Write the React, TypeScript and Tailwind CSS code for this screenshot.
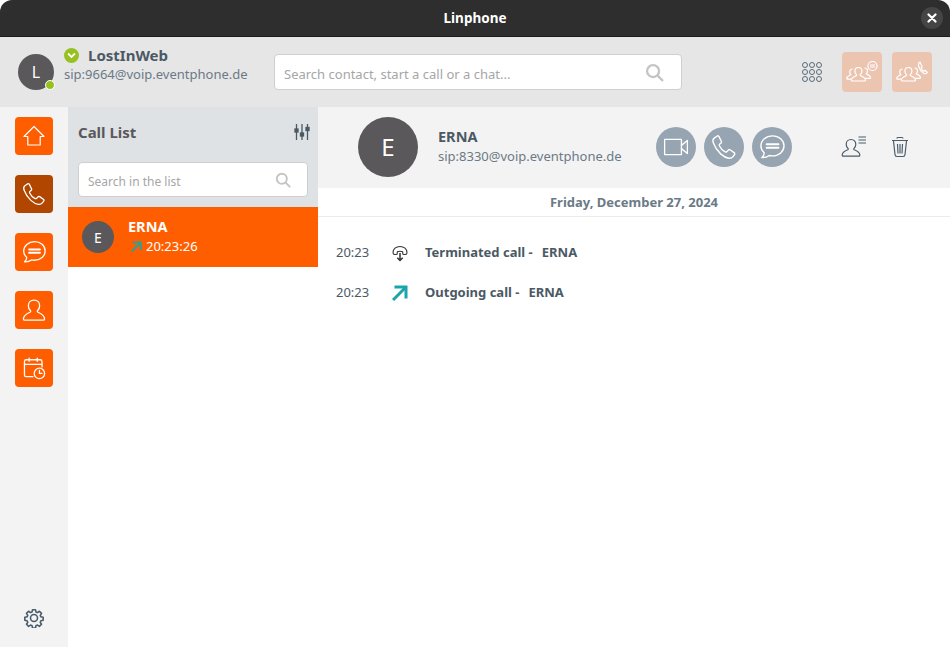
import React from "react";

const Stroke = ({ children, size = 26, color = "#fff", sw = 1.2, vb = "0 0 24 24" }: any) => (
  <svg width={size} height={size} viewBox={vb} fill="none" stroke={color} strokeWidth={sw} strokeLinecap="round" strokeLinejoin="round">
    {children}
  </svg>
);

const PhonePath = () => (
  <path d="M6.200 2.600 3.600 4.400C2.400 5.300 2.300 7 2.900 8.600c1.300 3.600 3.400 6.700 6.200 9.300 2.200 2 4.600 3.400 7 3.700 1.500.2 2.800-.4 3.600-1.400l1.400-1.800c.3-.5.3-1-.2-1.400l-3.700-2.600c-.5-.3-1-.3-1.400.1l-1.400 1.500c-.4.4-.9.4-1.400.2-2.300-1.200-4-3-5-5.200-.2-.5-.2-.9.2-1.300l1.300-1.200c.4-.4.5-.9.2-1.400L7.600 2.900c-.4-.5-.9-.6-1.400-.3Z" />
);

const ChatPath = () => (
  <>
    <path d="M12.500 2.500C6.800 2.500 2.500 6.300 2.500 11c0 2.300 1 4.300 2.700 5.800.2 1.700-.5 3.100-1.900 4.200 2.500.2 4.600-.4 6.300-1.700.9.200 1.900.3 2.900.3 5.500 0 9.800-3.800 9.800-8.600s-4.300-8.500-9.800-8.500Z" />
    <path d="M7.500 9.700h10M7.500 12.700h10" strokeWidth={1.800} />
  </>
);

const UserPath = () => (
  <path d="M12 2.800c-3.300 0-5.200 2.300-5.200 5.200 0 2 .8 3.400 1.800 4.400.6.600.4 1.300-.3 1.700-2.800 1.200-5.800 2.600-6 5.800-.1 1 .4 1.500 1.300 1.500h16.800c.9 0 1.400-.5 1.300-1.500-.2-3.200-3.200-4.600-6-5.800-.7-.4-.9-1.100-.3-1.700 1-1 1.800-2.400 1.800-4.400 0-2.900-1.900-5.200-5.200-5.200Z" />
);

const NavButton = ({ active, children }: { active?: boolean; children: React.ReactNode }) => (
  <div className={`flex h-[38px] w-[38px] items-center justify-center rounded-[4px] ${active ? "bg-[#b14600]" : "bg-[#ff5e00]"}`}>
    {children}
  </div>
);

const Round = ({ children }: { children: React.ReactNode }) => (
  <div className="flex h-10 w-10 items-center justify-center rounded-full bg-[#96a5b1]">{children}</div>
);

const Avatar = ({ letter, size, text }: { letter: string; size: string; text: string }) => (
  <div className={`flex shrink-0 items-center justify-center rounded-full bg-[#5a585b] text-white ${size} ${text}`}>{letter}</div>
);

const Search = ({ size }: { size: number }) => (
  <svg width={size} height={size} viewBox="0 0 20 20" fill="none" stroke="#c4c4c4" strokeWidth="2.400" strokeLinecap="round">
    <circle cx="8.500" cy="8.500" r="6.300" />
    <path d="m13.300 13.300 5 5" />
  </svg>
);

const Arrow = ({ size, sw }: { size: number; sw: number }) => (
  <svg width={size} height={size} viewBox="0 0 16 16" fill="none" stroke="#1aa5a8" strokeWidth={sw}>
    <path d="M2.500 2H14V13.500" />
    <path d="M14 2 1 15" />
  </svg>
);

const Group = ({ extra }: { extra: React.ReactNode }) => (
  <svg width="34" height="28" viewBox="0 0 34 28" fill="none" stroke="#fff" strokeWidth="1.200" strokeLinejoin="round">
    <path d="M7.500 11c-1.800 0-2.800 1.300-2.800 3 0 1.200.5 2 1.200 2.700-1.800.8-4 1.700-4.200 3.600 0 .6.300.9.800.9H6" />
    <path d="M19.500 10c1.800 0 3 1.300 3 3 0 1.300-.6 2.100-1.300 2.800 1.900.8 4.100 1.700 4.300 3.700 0 .6-.3.900-.8.900H20" />
    <path d="M13.500 9.500c-2.200 0-3.600 1.600-3.600 3.700 0 1.500.7 2.600 1.500 3.400.4.400.3.900-.2 1.100-2.200.9-4.700 2-4.900 4.300 0 .7.300 1 1 1h12.300c.6 0 1-.3.900-1-.2-2.300-2.700-3.400-4.900-4.300-.5-.2-.6-.7-.2-1.100.8-.8 1.500-1.900 1.500-3.400 0-2.100-1.400-3.700-3.400-3.700Z" />
    {extra}
  </svg>
);

export default function App() {
  return (
    <div className="flex h-[647px] w-[950px] flex-col overflow-hidden bg-white font-['Noto_Sans',sans-serif] text-[#4b5964]">
      <div className="relative flex h-[37px] shrink-0 items-center justify-center rounded-t-[12px] border-b border-[#1c1c1c] bg-[#2e2e2e]">
        <span className="text-[13.500px] font-bold text-white">Linphone</span>
        <div className="absolute right-[7px] top-[7px] flex h-[22px] w-[22px] items-center justify-center rounded-full bg-[#454545]">
          <svg width="10" height="10" viewBox="0 0 10 10" stroke="#fff" strokeWidth="2.200" strokeLinecap="round">
            <path d="m1.500 1.500 7 7M8.500 1.500l-7 7" />
          </svg>
        </div>
      </div>

      <div className="flex h-[70px] shrink-0 items-center bg-[#e6e6e6]">
        <div className="relative ml-[18px] mr-[10px]">
          <Avatar letter="L" size="h-9 w-9" text="text-[16px]" />
          <div className="absolute bottom-0 right-[-1px] h-[10px] w-[10px] rounded-full border border-white bg-[#96c11f]" />
        </div>
        <div className="w-[206px] pb-[16px]">
          <div className="flex h-[20px] items-center">
            <div className="flex h-[15px] w-[15px] items-center justify-center rounded-full bg-[#96c11f]">
              <svg width="9" height="7" viewBox="0 0 9 7" fill="none" stroke="#fff" strokeWidth="1.800">
                <path d="m1 1.500 3.500 3.500L8 1.500" />
              </svg>
            </div>
            <span className="ml-[9px] text-[15px] font-bold leading-none">LostInWeb</span>
          </div>
          <div className="text-[13px] leading-[18px] text-[#6b7a86]">sip:9664@voip.eventphone.de</div>
        </div>
        <div className="ml-[4px] flex h-9 w-[408px] items-center justify-between rounded-[4px] border border-[#cfcfcf] bg-white pl-[9px] pr-[17px]">
          <span className="pt-[6px] text-[13px] text-[#a6a6a6]">Search contact, start a call or a chat...</span>
          <Search size={19} />
        </div>
        <div className="ml-[120px] mr-[20px] grid grid-cols-3 gap-x-[1px] gap-y-[1px]">
          {Array.from({ length: 9 }).map((_, i) => (
            <div key={i} className="h-[6px] w-[6px] rounded-full border-[1.500px] border-[#5b6b78]" />
          ))}
        </div>
        <div className="flex h-10 w-10 items-center justify-center rounded-[4px] bg-[#ecc5b1]">
          <Group extra={<><circle cx="27.500" cy="8" r="4.500" /><path d="M25 7h5M25 9h5" /></>} />
        </div>
        <div className="ml-[10px] flex h-10 w-10 items-center justify-center rounded-[4px] bg-[#ecc5b1]">
          <Group extra={<path d="M25 4c-1.500.9-1.800 3-1.200 4.800.8 2.500 2.500 5 4.800 6.500 1.300.7 2.800.5 3.800-.8l-2.300-2.200-1.500.8c-1.200-.8-2-2-2.400-3.200l1-1L25 4Z" />} />
        </div>
      </div>

      <div className="flex min-h-0 flex-1">
        <div className="flex w-[68px] shrink-0 flex-col items-center bg-[#f3f3f3] pb-[19px] pt-[10px]">
          <div className="flex flex-col gap-5">
            <NavButton>
              <Stroke size={24}>
                <path d="M12 2.500 2 12.500h3.800v8.500h12.400v-8.500H22L12 2.500Z" />
              </Stroke>
            </NavButton>
            <NavButton active><Stroke><PhonePath /></Stroke></NavButton>
            <NavButton><Stroke><ChatPath /></Stroke></NavButton>
            <NavButton><Stroke><UserPath /></Stroke></NavButton>
            <NavButton>
              <Stroke>
                <path d="M11 20H4.800c-.9 0-1.600-.7-1.600-1.600V6c0-.9.7-1.600 1.600-1.600h13c.9 0 1.600.7 1.600 1.600v5" />
                <path d="M3.200 8.600h16.200M7.500 2.800v3M15 2.800v3" />
                <circle cx="17" cy="17" r="4.800" />
                <path d="M17 14.300V17h2.300" />
              </Stroke>
            </NavButton>
          </div>
          <div className="mt-auto">
            <svg width="20" height="20" viewBox="0 0 24 24" fill="none" stroke="#4b5c6b" strokeWidth="1.900" strokeLinejoin="round">
              <path d="M10.200 2h3.600l.5 2.700 1.900.8 2.300-1.600 2.500 2.600-1.500 2.300.8 1.800 2.700.6v3.600l-2.700.5-.8 1.900 1.500 2.300-2.500 2.500-2.300-1.500-1.900.8-.5 2.700h-3.600l-.5-2.700-1.900-.8-2.300 1.500-2.500-2.500 1.500-2.300-.8-1.900-2.700-.5v-3.600l2.700-.6.800-1.800-1.500-2.300 2.500-2.600 2.300 1.600 1.900-.8.500-2.700Z" />
              <circle cx="12" cy="12" r="4.200" />
            </svg>
          </div>
        </div>

        <div className="flex w-[250px] shrink-0 flex-col">
          <div className="h-[100px] shrink-0 bg-[#dfe2e5] px-[10px]">
            <div className="flex h-[50px] items-center justify-between">
              <span className="text-[15px] font-bold text-[#5a585b]">Call List</span>
              <svg className="-mr-[2px]" width="16" height="18" viewBox="0 0 16 18" fill="#4b5964" stroke="#4b5964" strokeWidth="1.300">
                <path d="M2.500 1v16M8 1v16M13.500 1v16" />
                <rect x="1" y="6" width="3" height="3" />
                <rect x="6.500" y="10" width="3" height="3" />
                <rect x="12" y="4.500" width="3" height="3" />
              </svg>
            </div>
            <div className="mt-[5px] flex h-[35px] items-center justify-between rounded-[4px] border border-[#cfcfcf] bg-white pl-[9px] pr-[16px]">
              <span className="pt-[4px] text-[12px] text-[#a6a6a6]">Search in the list</span>
              <Search size={16} />
            </div>
          </div>
          <div className="flex h-[60px] shrink-0 items-center bg-[#ff5e00] pl-[14px] text-white">
            <Avatar letter="E" size="h-8 w-8" text="text-[14px]" />
            <div className="ml-[14px]">
              <div className="-mt-[1px] text-[14.500px] font-bold leading-[19px]">ERNA</div>
              <div className="flex items-center pl-[3px] text-[13px] leading-[20px]">
                <Arrow size={11} sw={2.800} />
                <span className="ml-[4px]">20:23:26</span>
              </div>
            </div>
          </div>
        </div>

        <div className="flex min-w-0 flex-1 flex-col">
          <div className="flex h-[81px] shrink-0 items-center bg-[#f3f3f3] pb-[2px]">
            <div className="ml-[40px]"><Avatar letter="E" size="h-[60px] w-[60px]" text="text-[24px]" /></div>
            <div className="ml-[20px] w-[218px] pb-[2px]">
              <div className="text-[14.500px] font-bold leading-[20px]">ERNA</div>
              <div className="text-[13px] leading-[20px] text-[#6b7a86]">sip:8330@voip.eventphone.de</div>
            </div>
            <div className="flex gap-2">
              <Round>
                <Stroke size={26}>
                  <rect x="1.500" y="5" width="15.500" height="14" />
                  <path d="m17 10.500 5.500-4.500v12L17 13.500" />
                </Stroke>
              </Round>
              <Round><Stroke size={28}><PhonePath /></Stroke></Round>
              <Round><Stroke size={28}><ChatPath /></Stroke></Round>
            </div>
            <div className="ml-[48px]">
              <svg width="28" height="26" viewBox="0 0 28 24" fill="none" stroke="#4b5c6b" strokeWidth="1.200" strokeLinejoin="round">
                <path d="M11 4.500c-3 0-4.800 2.200-4.800 4.800 0 1.800.7 3 1.700 3.900.6.500.4 1.200-.2 1.500-2.600 1.100-5.300 2.300-5.500 5.100-.1.800.4 1.300 1.100 1.300h15.400c.8 0 1.200-.5 1.100-1.300-.2-2.800-2.900-4-5.500-5.100-.6-.3-.8-1-.2-1.500 1-.9 1.700-2.100 1.700-3.900 0-2.600-1.800-4.800-4.800-4.800Z" />
                <path d="M18.500 2h7.500M18.500 5h7.500M18.500 8h7.500" />
              </svg>
            </div>
            <div className="ml-[23px]">
              <svg width="18" height="22" viewBox="0 0 18 22" fill="none" stroke="#4b5c6b" strokeWidth="1.200" strokeLinejoin="round">
                <path d="M1 4.500h16M6 2.500c0-.7.400-1 1-1h4c.6 0 1 .3 1 1M2.500 5 4 18.500c.1 1.200.8 2 2 2h6c1.200 0 1.900-.8 2-2L15.500 5M6.500 8l.5 9.500M9 8v9.500M11.500 8l-.5 9.500" />
              </svg>
            </div>
          </div>
          <div className="flex h-[29px] shrink-0 items-center justify-center border-b border-[#ececec] pt-[1px] text-[13px] font-bold text-[#6b7a86]">
            Friday, December 27, 2024
          </div>
          <div className="flex flex-col pt-[16px]">
            <div className="flex h-10 items-center pl-[18px]">
              <span className="w-[56px] text-[13px]">20:23</span>
              <span className="flex w-[33px]">
                <svg width="16" height="17" viewBox="0 0 16 17" fill="none" stroke="#333" strokeWidth="1.100" strokeLinejoin="round">
                  <path d="M4 9.500H2.800C1.700 9.500 1 8.700 1 7.500 1 4 4 1.500 8 1.500s7 2.500 7 6c0 1.200-.7 2-1.800 2H12c-.8 0-1.300-.6-1.300-1.300V6.800C9 6.200 7 6.200 5.300 6.800v1.400c0 .8-.5 1.300-1.300 1.300Z" />
                  <path d="M8 8v7.500M5.300 12.800 8 15.500l2.700-2.700" strokeWidth="1.500" />
                </svg>
              </span>
              <span className="text-[13px] font-bold">Terminated call -</span>
              <span className="ml-[9px] text-[13px] font-bold">ERNA</span>
            </div>
            <div className="flex h-10 items-center pl-[18px]">
              <span className="w-[56px] text-[13px]">20:23</span>
              <span className="flex w-[33px]"><Arrow size={16} sw={3} /></span>
              <span className="text-[13px] font-bold">Outgoing call -</span>
              <span className="ml-[9px] text-[13px] font-bold">ERNA</span>
            </div>
          </div>
        </div>
      </div>
    </div>
  );
}
